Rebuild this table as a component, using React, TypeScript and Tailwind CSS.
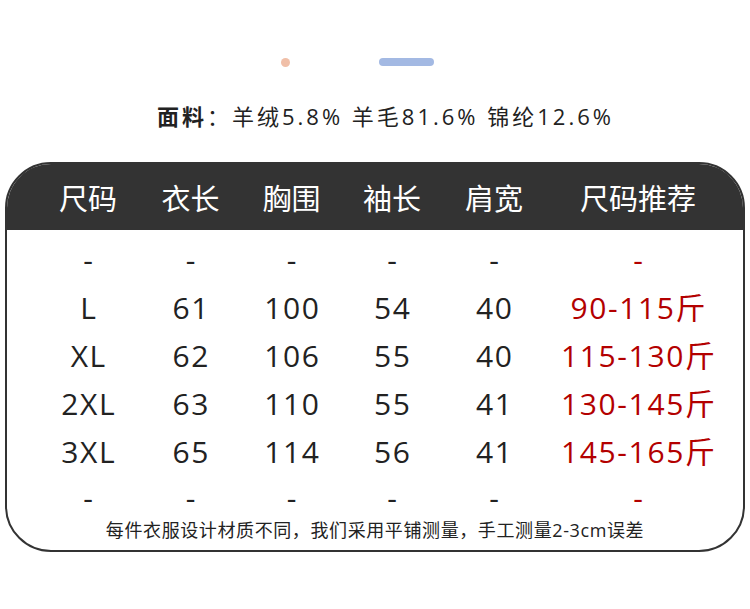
const headers = ["尺码", "衣长", "胸围", "袖长", "肩宽", "尺码推荐"];

const rows: string[][] = [
  ["-", "-", "-", "-", "-", "-"],
  ["L", "61", "100", "54", "40", "90-115斤"],
  ["XL", "62", "106", "55", "40", "115-130斤"],
  ["2XL", "63", "110", "55", "41", "130-145斤"],
  ["3XL", "65", "114", "56", "41", "145-165斤"],
  ["-", "-", "-", "-", "-", "-"],
];

const font = { fontFamily: '"Open Sans", "Noto Sans CJK SC", sans-serif' };

export default function App() {
  return (
    <div className="w-[750px] h-[609px] bg-white overflow-hidden" style={font}>
      {/* decoration dots */}
      <div className="flex items-center h-[124px] pt-[58px] flex-col">
        <div className="flex items-center h-[8px]">
          <div className="w-[9px] h-[9px] rounded-full bg-[#f0bfa8] ml-[-36px]"></div>
          <div className="w-[55px] h-[8px] rounded-full bg-[#a3b9e3] ml-[89px]"></div>
        </div>
        <div className="mt-[35px] text-[22px] leading-[30px] text-[#222] tracking-[3px] pl-[21px]">
          <span className="font-bold">面料</span>：羊绒5.8% 羊毛81.6% 锦纶12.6%
        </div>
      </div>

      {/* table */}
      <div className="mx-[5px] mt-[38px] border-2 border-[#333] rounded-[46px] overflow-hidden">
        <div className="bg-[#333] h-[66px] grid grid-cols-[102px_103px_99px_102px_102px_186px] pl-[30px] items-center">
          {headers.map((h) => (
            <div key={h} className="text-center text-white text-[29px] leading-none" style={{ fontFamily: '"Noto Sans CJK SC", sans-serif' }}>
              {h}
            </div>
          ))}
        </div>
        <div className="pt-[6px]">
          {rows.map((r, i) => (
            <div
              key={i}
              className={`grid grid-cols-[102px_103px_99px_102px_102px_186px] pl-[30px] items-center ${i === rows.length - 1 ? "h-[44px]" : "h-[48px]"}`}
            >
              {r.map((c, j) => (
                <div
                  key={j}
                  className={`text-center text-[30px] leading-none tracking-[1.6px] pl-[1.6px] ${j === 5 ? "text-[#b30000]" : "text-[#222]"}`}
                >
                  {c}
                </div>
              ))}
            </div>
          ))}
        </div>
        <div className="h-[20px] pb-[30px] text-center text-[18px] leading-[20px] text-[#222] tracking-[0.6px]">
          每件衣服设计材质不同，我们采用平铺测量，手工测量2-3cm误差
        </div>
      </div>
    </div>
  );
}
